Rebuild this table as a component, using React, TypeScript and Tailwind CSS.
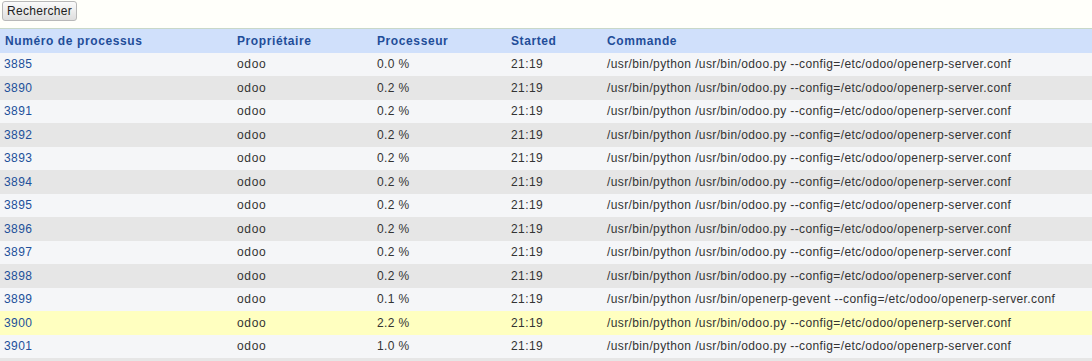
import React from 'react';

type Proc = { pid: string; owner: string; cpu: string; started: string; cmd: string; hot?: boolean };

const odooCmd = '/usr/bin/python /usr/bin/odoo.py --config=/etc/odoo/openerp-server.conf';

const procs: Proc[] = [
	{ pid: '3885', owner: 'odoo', cpu: '0.0 %', started: '21:19', cmd: odooCmd },
	{ pid: '3890', owner: 'odoo', cpu: '0.2 %', started: '21:19', cmd: odooCmd },
	{ pid: '3891', owner: 'odoo', cpu: '0.2 %', started: '21:19', cmd: odooCmd },
	{ pid: '3892', owner: 'odoo', cpu: '0.2 %', started: '21:19', cmd: odooCmd },
	{ pid: '3893', owner: 'odoo', cpu: '0.2 %', started: '21:19', cmd: odooCmd },
	{ pid: '3894', owner: 'odoo', cpu: '0.2 %', started: '21:19', cmd: odooCmd },
	{ pid: '3895', owner: 'odoo', cpu: '0.2 %', started: '21:19', cmd: odooCmd },
	{ pid: '3896', owner: 'odoo', cpu: '0.2 %', started: '21:19', cmd: odooCmd },
	{ pid: '3897', owner: 'odoo', cpu: '0.2 %', started: '21:19', cmd: odooCmd },
	{ pid: '3898', owner: 'odoo', cpu: '0.2 %', started: '21:19', cmd: odooCmd },
	{ pid: '3899', owner: 'odoo', cpu: '0.1 %', started: '21:19', cmd: '/usr/bin/python /usr/bin/openerp-gevent --config=/etc/odoo/openerp-server.conf' },
	{ pid: '3900', owner: 'odoo', cpu: '2.2 %', started: '21:19', cmd: odooCmd, hot: true },
	{ pid: '3901', owner: 'odoo', cpu: '1.0 %', started: '21:19', cmd: odooCmd },
];

export default function App() {
	return (
		<div className="min-h-screen bg-[#fffffa] text-[12px] text-[#333]" style={{ fontFamily: '"Liberation Sans", Arial, sans-serif' }}>
			<div className="pt-px pl-[2px] h-[28px]">
				<button className="h-[20px] px-[4px] rounded-[3px] border border-[#b8b8b8] bg-gradient-to-b from-[#fbfbfb] to-[#dedede] text-[12px] text-[#222] tracking-[0.3px]">
					Rechercher
				</button>
			</div>

			<table className="w-full border-collapse">
				<thead>
					<tr className="bg-[#d0e0fb] border-t border-[#c8d8c8] text-left text-[#1f4d99] font-bold text-[12px] tracking-[0.6px]">
						<th className="w-[233px] h-[24px] pl-[5px] font-bold">Numéro de processus</th>
						<th className="w-[140px] pl-[4px] font-bold">Propriétaire</th>
						<th className="w-[134px] pl-[4px] font-bold">Processeur</th>
						<th className="w-[96px] pl-[4px] font-bold">Started</th>
						<th className="pl-[4px] font-bold">Commande</th>
					</tr>
				</thead>
				<tbody>
					{procs.map((p, i) => (
						<tr
							key={p.pid}
							className={
								p.hot
									? 'bg-[#ffffc0] h-[23.5px]'
									: i % 2 === 0
										? 'bg-[#f5f6f8] h-[23.5px]'
										: 'bg-[#e6e6e6] h-[23.5px]'
							}
						>
							<td className="pl-[4px] text-[#21509a] tracking-[0.4px]">{p.pid}</td>
							<td className="pl-[4px] tracking-[0.7px]">{p.owner}</td>
							<td className="pl-[4px] tracking-[0.4px]">{p.cpu}</td>
							<td className="pl-[4px] tracking-[0.4px]">{p.started}</td>
							<td className="pl-[4px] tracking-[0.38px]">{p.cmd}</td>
						</tr>
					))}
					<tr className="bg-[#e6e6e6] h-[23.5px]">
						<td colSpan={5}></td>
					</tr>
				</tbody>
			</table>
		</div>
	);
}
